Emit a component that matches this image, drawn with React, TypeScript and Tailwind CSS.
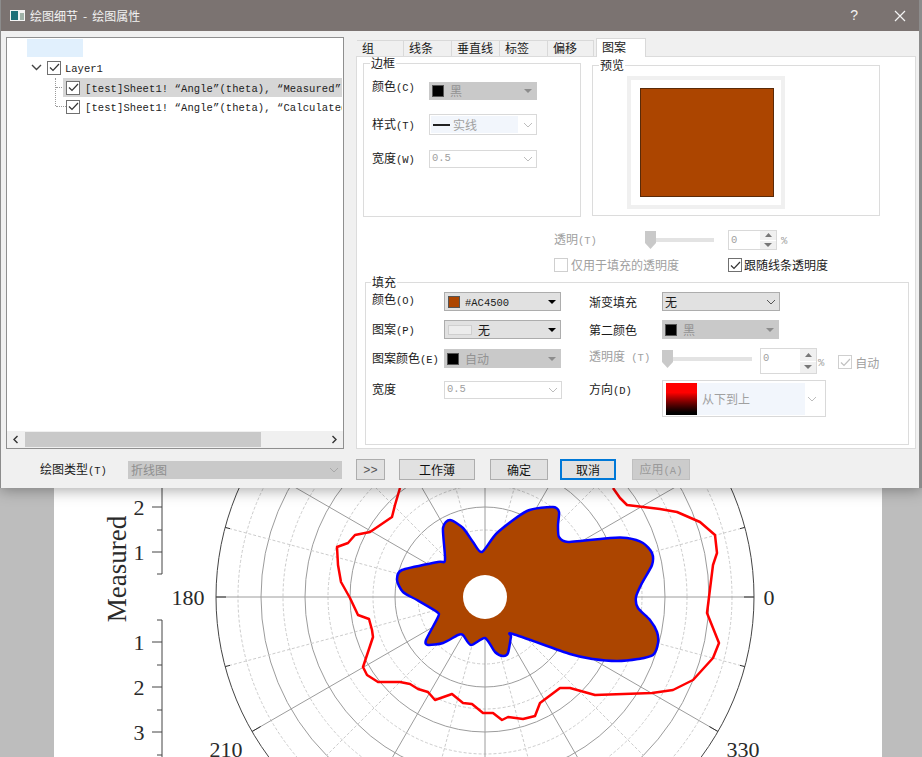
import React from "react";

const zh = "font-['Noto_Sans_CJK_SC','Liberation_Sans',sans-serif]";

// latin bits in the dialog are a 6px wide mono, cjk is 12px
const En = ({ children }: { children: React.ReactNode }) => (
  <span className="font-['Liberation_Mono',monospace] text-[10.5px]">{children}</span>
);

const Label = ({ text, hint, dim, w, cls = "" }: { text: string; hint?: string; dim?: boolean; w: string; cls?: string }) => (
  <div className={`${w} ${cls} shrink-0 whitespace-nowrap ${dim ? "text-[#a0a0a0]" : "text-[#1a1a1a]"}`}>
    {text}
    {hint && <En>{hint}</En>}
  </div>
);

const Chevron = ({ color = "#a8a8a8" }: { color?: string }) => (
  <svg width="10" height="6" viewBox="0 0 10 6" className="shrink-0">
    <path d="M1 1l4 4 4-4" fill="none" stroke={color} strokeWidth="1" />
  </svg>
);

const Caret = ({ color = "#000" }: { color?: string }) => (
  <svg width="8" height="4" viewBox="0 0 8 4" className="shrink-0">
    <path d="M0 0h8L4 4z" fill={color} />
  </svg>
);

const Check = ({ color = "#333" }: { color?: string }) => (
  <svg width="11" height="9" viewBox="0 0 11 9">
    <path d="M1 4.5l3 3 6-6.5" fill="none" stroke={color} strokeWidth="1.2" />
  </svg>
);

const CheckBox = ({ on = true, dim }: { on?: boolean; dim?: boolean }) => (
  <span
    className={`flex h-[14px] w-[14px] shrink-0 items-center justify-center border bg-white ${
      dim ? "border-[#cfcfcf]" : "border-[#707070]"
    }`}
  >
    {on && <Check color={dim ? "#c0c0c0" : "#333"} />}
  </span>
);

const Swatch = ({ color = "#000" }: { color?: string }) => (
  <span className="h-[12px] w-[12px] shrink-0 border border-[#555]" style={{ background: color }} />
);

// flat grey owner-drawn combo, disabled
const GreyCombo = ({ w, h = "h-[18px]", label }: { w: string; h?: string; label: string }) => (
  <div className={`${w} ${h} flex shrink-0 items-center bg-[#c9c9c9] pl-[3px] pr-[5px] text-[#929292]`}>
    <Swatch />
    <span className="ml-[6px] flex-1">{label}</span>
    <Caret color="#8c8c8c" />
  </div>
);

const ActiveCombo = ({ children }: { children: React.ReactNode }) => (
  <div className="flex h-[19px] w-[117px] shrink-0 items-center border border-[#adadad] bg-[#e1e1e1] pl-[3px] pr-[4px] text-[#1a1a1a]">
    {children}
    <span className="flex-1" />
    <Caret />
  </div>
);

const WhiteCombo = ({ w, children }: { w: string; children: React.ReactNode }) => (
  <div className={`${w} flex h-[18px] shrink-0 items-center justify-between border border-[#d9d9d9] bg-white pl-[2px] pr-[3px] text-[#a0a0a0]`}>
    {children}
    <Chevron color="#bdbdbd" />
  </div>
);

const Spin = ({ w, h }: { w: string; h: string }) => (
  <div className={`${w} ${h} flex shrink-0 border border-[#d9d9d9] bg-white text-[#a0a0a0]`}>
    <span className="flex-1 pl-[2px] font-['Liberation_Mono',monospace] text-[10.5px] leading-[18px]">0</span>
    <div className="flex w-[16px] flex-col bg-[#f0f0f0]">
      <span className="flex flex-1 items-center justify-center border-b border-white">
        <svg width="7" height="4" viewBox="0 0 7 4">
          <path d="M0 4h7L3.5 0z" fill="#777" />
        </svg>
      </span>
      <span className="flex flex-1 items-center justify-center">
        <Caret color="#777" />
      </span>
    </div>
  </div>
);

const Slider = ({ w }: { w: string }) => (
  <div className={`${w} flex h-[20px] shrink-0 items-center`}>
    <svg width="11" height="20" viewBox="0 0 11 20" className="shrink-0">
      <path d="M0 1h11v12l-5.5 6L0 13z" fill="#c9c9c9" />
    </svg>
    <span className="h-[4px] flex-1 bg-[#e3e3e3]" />
  </div>
);

const Group = ({ title, className, legend, children }: { title: string; className: string; legend: string; children: React.ReactNode }) => (
  <fieldset className={`border border-[#dcdcdc] ${className}`}>
    <legend className={`${legend} px-[1px] text-[12px] leading-[12px] text-[#1a1a1a]`}>{title}</legend>
    {children}
  </fieldset>
);

const tabs = [
  { t: "组", w: "w-[47px]" },
  { t: "线条", w: "w-[48px]" },
  { t: "垂直线", w: "w-[48px]" },
  { t: "标签", w: "w-[48px]" },
  { t: "偏移", w: "w-[46px]" },
];

const PlotRow = ({ text, selected }: { text: string; selected?: boolean }) => (
  <div className="-ml-[7px] flex h-[19px] items-center">
    <span className="w-[10px] shrink-0 border-b border-dotted border-[#9a9a9a]" />
    <div className={`-ml-[3px] flex h-[19px] w-[279px] shrink-0 items-center overflow-hidden pl-[3px] ${selected ? "bg-[#d6d6d6]" : ""}`}>
      <CheckBox />
      <span className="ml-[5px] whitespace-pre tracking-[0.1px] text-[#222]">
        <En>{text}</En>
      </span>
    </div>
  </div>
);

const Tree = () => (
  <div className="flex h-[412px] w-[338px] shrink-0 flex-col border border-[#8f8f8f] bg-white">
    <div className="flex-1 overflow-hidden pt-px">
      <div className="ml-[20px] h-[18px] w-[56px] bg-[#e1f0fd]" />
      <div className="mt-[3px] flex h-[15px] items-center pl-[24px]">
        <svg width="11" height="7" viewBox="0 0 11 7" className="shrink-0">
          <path d="M1 1l4.5 4.5L10 1" fill="none" stroke="#444" strokeWidth="1.4" />
        </svg>
        <span className="ml-[5px]">
          <CheckBox />
        </span>
        <span className="ml-[4px] text-[#222]">
          <En>Layer1</En>
        </span>
      </div>
      <div className="ml-[48px] mt-[3px] h-[28px] border-l border-dotted border-[#9a9a9a] pl-[7px]">
        <PlotRow selected text="[test]Sheet1! “Angle”(theta), “Measured”" />
        <PlotRow text="[test]Sheet1! “Angle”(theta), “Calculated”" />
      </div>
    </div>
    <div className="flex h-[17px] shrink-0 items-center bg-[#f0f0f0] pl-[5px] pr-[5px]">
      <svg width="7" height="9" viewBox="0 0 7 9" className="shrink-0">
        <path d="M5.5 1L2 4.5 5.5 8" fill="none" stroke="#333" strokeWidth="1.4" />
      </svg>
      <span className="ml-[6px] h-[15px] w-[236px] bg-[#c9c9c9]" />
      <span className="flex-1" />
      <svg width="7" height="9" viewBox="0 0 7 9" className="shrink-0">
        <path d="M1.5 1L5 4.5 1.5 8" fill="none" stroke="#333" strokeWidth="1.4" />
      </svg>
    </div>
  </div>
);

const Button = ({ label, w, ml, kind }: { label: React.ReactNode; w: string; ml: string; kind?: "focus" | "off" }) => (
  <button
    className={`${w} ${ml} h-[21px] shrink-0 text-[12px] leading-none ${
      kind === "focus"
        ? "border-2 border-[#0078d7] bg-[#e1e1e1] text-[#111]"
        : kind === "off"
          ? "border border-[#bfbfbf] bg-[#cccccc] text-[#9a9a9a]"
          : "border border-[#adadad] bg-[#e1e1e1] text-[#111]"
    }`}
  >
    {label}
  </button>
);

const PatternTab = () => (
  <div className="flex h-[393px] flex-col border border-[#dcdcdc] bg-white pl-[6px]">
    <div className="flex">
      <Group title="边框" legend="-ml-[2px]" className="h-[160px] w-[218px] px-[8px]">
        <div className="mt-[13px] flex items-start">
          <Label w="w-[57px]" cls="-mt-[5px]" text="颜色" hint="(C)" />
          <GreyCombo w="w-[108px]" label="黑" />
        </div>
        <div className="mt-[14px] flex items-center">
          <Label w="w-[57px]" text="样式" hint="(T)" />
          <div className="flex h-[21px] w-[108px] shrink-0 items-center border border-[#d9d9d9] bg-white pl-[1px] pr-[3px]">
            <div className="flex h-[17px] w-[87px] items-center bg-[#f2f6fc] pl-[2px] text-[#a0a0a0]">
              <span className="h-[2px] w-[17px] bg-[#222]" />
              <span className="ml-[3px]">实线</span>
            </div>
            <span className="flex-1" />
            <Chevron color="#bdbdbd" />
          </div>
        </div>
        <div className="mt-[14px] flex items-center">
          <Label w="w-[57px]" text="宽度" hint="(W)" />
          <WhiteCombo w="w-[108px]">
            <En>0.5</En>
          </WhiteCombo>
        </div>
      </Group>
      <Group title="预览" legend="ml-[6px]" className="ml-[11px] mt-[2px] h-[157px] w-[288px]">
        <div className="ml-[34px] mt-[5px] h-[133px] w-[158px] border-[4px] border-[#f0f0f0] bg-white pl-[9px] pt-[8px]">
          <div className="h-[109px] w-[134px] border border-[#5a2a08] bg-[#ac4500]" />
        </div>
      </Group>
    </div>

    <div className="mt-[13px] flex h-[20px] items-center pl-[191px]">
      <Label dim w="w-[91px]" text="透明" hint="(T)" />
      <Slider w="w-[69px]" />
      <div className="ml-[14px]">
        <Spin w="w-[49px]" h="h-[20px]" />
      </div>
      <span className="ml-[4px] text-[#a0a0a0]">
        <En>%</En>
      </span>
    </div>
    <div className="mt-[8px] flex h-[14px] items-center pl-[191px]">
      <CheckBox on={false} dim />
      <span className="ml-[3px] w-[157px] text-[#a0a0a0]">仅用于填充的透明度</span>
      <CheckBox />
      <span className="ml-[2px] text-[#1a1a1a]">跟随线条透明度</span>
    </div>

    <Group title="填充" legend="-ml-[1px]" className="ml-[2px] mt-[4px] h-[169px] w-[544px] px-[6px]">
      <div className="flex">
        <div className="w-[217px] shrink-0">
          <div className="mt-[4px] flex items-start">
            <Label w="w-[72px]" cls="-mt-[2px]" text="颜色" hint="(O)" />
            <ActiveCombo>
              <Swatch color="#ac4500" />
              <span className="ml-[5px]">
                <En>#AC4500</En>
              </span>
            </ActiveCombo>
          </div>
          <div className="mt-[9px] flex items-center">
            <Label w="w-[72px]" text="图案" hint="(P)" />
            <ActiveCombo>
              <span className="h-[10px] w-[24px] border border-[#cfcfcf] bg-[#ececec]" />
              <span className="ml-[6px]">无</span>
            </ActiveCombo>
          </div>
          <div className="mt-[9px] flex items-center">
            <Label w="w-[72px]" text="图案颜色" hint="(E)" />
            <GreyCombo w="w-[117px]" h="h-[19px]" label="自动" />
          </div>
          <div className="mt-[12px] flex items-center">
            <Label w="w-[72px]" cls="-mt-[2px]" text="宽度" />
            <WhiteCombo w="w-[118px]">
              <En>0.5</En>
            </WhiteCombo>
          </div>
        </div>
        <div className="flex-1">
          <div className="mt-[4px] flex items-center">
            <Label w="w-[73px]" text="渐变填充" />
            <div className="flex h-[19px] w-[118px] items-center justify-between border border-[#adadad] bg-[#e1e1e1] pl-[2px] pr-[3px] text-[#1a1a1a]">
              无
              <Chevron color="#555" />
            </div>
          </div>
          <div className="mt-[9px] flex items-center">
            <Label w="w-[73px]" text="第二颜色" />
            <GreyCombo w="w-[117px]" h="h-[19px]" label="黑" />
          </div>
          <div className="mt-[10px] flex h-[19px] items-start">
            <Label dim w="w-[73px]" cls="-mt-[2px]" text="透明度" hint={"\u00a0(T)"} />
            <Slider w="w-[90px]" />
            <div className="-mt-[1px] ml-[8px]">
              <Spin w="w-[57px]" h="h-[26px]" />
            </div>
            <span className="ml-[1px] mt-[3px] text-[#a0a0a0]">
              <En>%</En>
            </span>
            <span className="ml-[14px] mt-[6px]">
              <CheckBox dim />
            </span>
            <span className="ml-[3px] mt-[5px] text-[#a0a0a0]">自动</span>
          </div>
          <div className="mt-[12px] flex items-start">
            <Label w="w-[73px]" text="方向" hint="(D)" />
            <div className="flex h-[37px] w-[164px] items-center border border-[#d9d9d9] bg-white pl-[3px] pr-[8px] text-[#a0a0a0]">
              <span className="h-[32px] w-[31px] shrink-0 bg-gradient-to-b from-[#ff0000] from-30% to-[#000000]" />
              <div className="flex h-[32px] w-[108px] items-center bg-[#f2f6fc] pl-[5px]">从下到上</div>
              <span className="flex-1" />
              <Chevron color="#bdbdbd" />
            </div>
          </div>
        </div>
      </div>
    </Group>
  </div>
);

const cx = 485;
const cy = 597;

const bluePts: [number, number][] = [
  [482, 552], [497, 533], [527, 511], [553, 507], [559, 512], [558, 525], [559, 537], [568, 542], [610, 538], [627, 538], [643, 543], [652, 553], [652, 565], [642, 583], [636, 597], [638, 608], [650, 620], [657, 632], [658, 643], [653, 655], [638, 659], [617, 661], [593, 659], [570, 654], [513, 634], [511, 637], [508, 653], [503, 656], [495, 652], [485, 638], [471, 645], [463, 635], [458, 635], [443, 643], [428, 645], [426, 640], [438, 617], [437, 612], [417, 600], [403, 592], [397, 580], [402, 570], [438, 562], [445, 560], [443, 528], [450, 520], [463, 528], [473, 542],
];

const redPts =
  "400,488 395,505 392,517 370,532 355,535 348,543 337,547 338,565 341,582 350,598 358,615 369,619 372,630 373,637 363,667 367,675 378,682 400,682 410,684 418,689 428,692 435,700 452,694 463,703 472,704 483,713 493,713 502,720 508,717 523,719 535,716 540,703 560,688 570,688 595,695 652,693 673,690 693,680 713,658 719,643 707,613 713,565 717,553 715,535 700,522 677,512 660,509 627,505 620,498 613,488";

// closed catmull-rom through the traced points, the outline is a smooth curve
const smooth = (p: [number, number][]) => {
  const n = p.length;
  let d = `M${p[0][0]} ${p[0][1]}`;
  for (let i = 0; i < n; i++) {
    const [a, b, c, e] = [p[(i + n - 1) % n], p[i], p[(i + 1) % n], p[(i + 2) % n]];
    const c1 = [b[0] + (c[0] - a[0]) / 8, b[1] + (c[1] - a[1]) / 8];
    const c2 = [c[0] - (e[0] - b[0]) / 8, c[1] - (e[1] - b[1]) / 8];
    d += `C${c1[0]} ${c1[1]} ${c2[0]} ${c2[1]} ${c[0]} ${c[1]}`;
  }
  return d + "Z";
};

const polar = (r: number, deg: number) => {
  const a = (deg * Math.PI) / 180;
  return { x: cx + r * Math.cos(a), y: cy - r * Math.sin(a) };
};

const PolarChart = () => {
  const spokes = Array.from({ length: 24 }, (_, i) => i * 15);
  const ticksUp = [574, 552, 530, 507];
  const ticksDown = [620, 642, 665, 687, 710, 732, 755];
  const chartText = "fill-[#2a2a2a] font-['Liberation_Serif',serif] text-[22px]";
  return (
    <svg viewBox="54 488 828 269" className="h-[269px] w-[828px]">
      {[67, 112, 157, 202, 247].map((r) => (
        <circle key={r} cx={cx} cy={cy} r={r} fill="none" stroke="#cccccc" strokeDasharray="3 2" />
      ))}
      {[90, 135, 180, 224].map((r) => (
        <circle key={r} cx={cx} cy={cy} r={r} fill="none" stroke="#9c9c9c" />
      ))}
      {spokes.map((d) => {
        const a = polar(22, d);
        const b = polar(269, d);
        const major = d % 30 === 0;
        return (
          <line
            key={d}
            x1={a.x}
            y1={a.y}
            x2={b.x}
            y2={b.y}
            stroke={major ? "#9c9c9c" : "#cccccc"}
            strokeDasharray={major ? undefined : "3 2"}
          />
        );
      })}
      {spokes.map((d) => {
        const a = polar(d % 30 === 0 ? 259 : 264, d);
        const b = polar(269, d);
        return <line key={d} x1={a.x} y1={a.y} x2={b.x} y2={b.y} stroke="#333" />;
      })}
      <circle cx={cx} cy={cy} r={269} fill="none" stroke="#444" />

      <path d={smooth(bluePts)} fill="#ac4500" stroke="#0000ff" strokeWidth="2.5" strokeLinejoin="round" />
      <circle cx={cx} cy={cy} r={22} fill="#fff" />
      <polyline points={redPts} fill="none" stroke="#ff0000" strokeWidth="2.5" strokeLinejoin="round" />

      <line x1={162} y1={488} x2={162} y2={574} stroke="#444" />
      <line x1={162} y1={620} x2={162} y2={757} stroke="#444" />
      {[...ticksUp, ...ticksDown].map((y) => (
        <line key={y} x1={[507, 552, 642, 687, 732].includes(y) ? 152 : 157} y1={y} x2={162} y2={y} stroke="#444" />
      ))}

      <text x={139} y={515} textAnchor="middle" className={chartText}>2</text>
      <text x={139} y={560} textAnchor="middle" className={chartText}>1</text>
      <text x={139} y={650} textAnchor="middle" className={chartText}>1</text>
      <text x={139} y={695} textAnchor="middle" className={chartText}>2</text>
      <text x={139} y={740} textAnchor="middle" className={chartText}>3</text>
      <text x={188} y={605} textAnchor="middle" className={chartText}>180</text>
      <text x={769} y={605} textAnchor="middle" className={chartText}>0</text>
      <text x={226} y={757} textAnchor="middle" className={chartText}>210</text>
      <text x={743} y={757} textAnchor="middle" className={chartText}>330</text>
      <text
        transform="translate(126 569) rotate(-90)"
        textAnchor="middle"
        className="fill-[#2a2a2a] font-['Liberation_Serif',serif] text-[27px]"
      >
        Measured
      </text>
    </svg>
  );
};

export default function App() {
  return (
    <div className={`flex h-[757px] w-[922px] flex-col overflow-hidden bg-[#bdbdbd] text-[12px] ${zh}`}>
      <div className="relative z-10 flex h-[488px] w-[922px] shrink-0 bg-[#8c8c8c] pl-px pr-[3px] shadow-[0_2px_14px_rgba(0,0,0,0.35)]">
        <div className="flex h-[488px] w-[918px] shrink-0 flex-col bg-[#f0f0f0]">
          <div className="flex h-[31px] shrink-0 items-center bg-[#7b7371] pl-[9px] text-[#f2f2f2]">
            <svg width="15" height="11" viewBox="0 0 15 11" className="shrink-0">
              <rect width="15" height="11" fill="#f4f4f4" />
              <rect x="1" y="1" width="7" height="9" fill="#1f6f78" />
              <rect x="10" y="3" width="4" height="7" fill="#9fb2a8" />
            </svg>
            <span className="ml-[5px]">
              绘图细节<span className="mx-[5px]">-</span>绘图属性
            </span>
            <span className="flex-1" />
            <span className="mr-[36px] font-['Liberation_Sans',sans-serif] text-[14px]">?</span>
            <svg width="12" height="12" viewBox="0 0 12 12" className="mr-[13px] shrink-0">
              <path d="M1 1l10 10M11 1L1 11" stroke="#f4f4f4" strokeWidth="1.2" />
            </svg>
          </div>

          <div className="flex shrink-0 pl-[5px] pt-[6px]">
            <Tree />
            <div className="ml-[12px] w-[560px] shrink-0">
              <div className="flex h-[19px] items-end pl-px">
                {tabs.map((tab) => (
                  <div
                    key={tab.t}
                    className={`${tab.w} h-[16px] shrink-0 border-r border-t border-[#d9d9d9] pl-[5px] leading-[14px] text-[#1a1a1a]`}
                  >
                    {tab.t}
                  </div>
                ))}
                <div className="relative z-10 -mb-px ml-[2px] h-[19px] w-[50px] shrink-0 border border-b-0 border-[#d9d9d9] bg-white pl-[5px] leading-[15px] text-[#1a1a1a]">
                  图案
                </div>
              </div>
              <PatternTab />
            </div>
          </div>

          <div className="flex flex-1 items-center pt-[2px]">
            <div className="ml-[39px] w-[88px] shrink-0 text-[#1a1a1a]">
              绘图类型<En>(T)</En>
            </div>
            <div className="flex h-[18px] w-[214px] shrink-0 items-center justify-between bg-[#c9c9c9] pl-[3px] pr-[3px] text-[#8e8e8e]">
              折线图
              <Chevron color="#a8a8a8" />
            </div>
            <Button w="w-[29px]" ml="ml-[14px]" label={<span className="font-['Liberation_Mono',monospace] text-[#555]">{">>"}</span>} />
            <Button w="w-[76px]" ml="ml-[14px]" label="工作薄" />
            <Button w="w-[58px]" ml="ml-[15px]" label="确定" />
            <Button w="w-[56px]" ml="ml-[12px]" label="取消" kind="focus" />
            <Button
              w="w-[58px]"
              ml="ml-[16px]"
              kind="off"
              label={
                <>
                  应用<En>(A)</En>
                </>
              }
            />
          </div>
        </div>
      </div>

      <div className="ml-[54px] h-[269px] w-[828px] shrink-0 bg-white">
        <PolarChart />
      </div>
    </div>
  );
}
